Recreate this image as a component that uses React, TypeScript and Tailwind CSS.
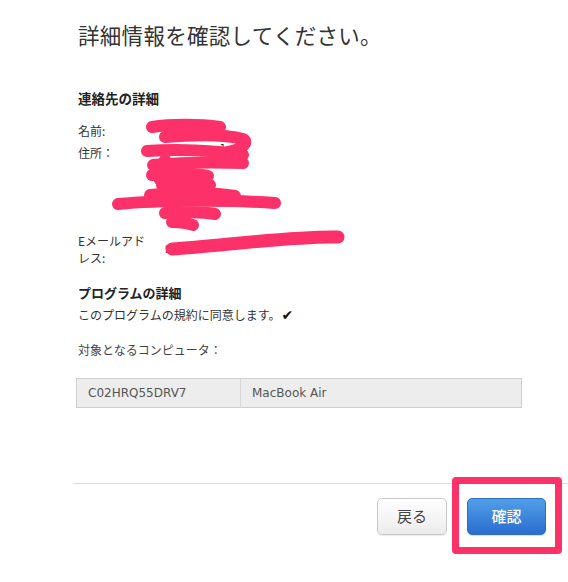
import React from "react";

const jp = { fontFamily: '"Noto Sans CJK JP", "Noto Sans", sans-serif' };
const lat = { fontFamily: '"DejaVu Sans", "Noto Sans CJK JP", sans-serif' };

export default function App() {
  return (
    <div className="relative w-[568px] h-[582px] bg-white overflow-hidden" style={jp}>
      <div className="pt-[21px] pl-[78px]">
        <h1 className="text-[21.5px] leading-[28px] text-[#333] tracking-[0.3px]">詳細情報を確認してください。</h1>

        <h2 className="mt-[39px] text-[13.5px] leading-[20px] font-bold text-[#222]">連絡先の詳細</h2>

        <div className="mt-[14px] flex text-[12px] leading-[17px] text-[#333]">
          <div className="w-[87px]">名前:</div>
          <div className="h-[17px]"></div>
        </div>
        <div className="mt-[5px] flex text-[12px] leading-[17px] text-[#333]">
          <div className="w-[87px]">住所：</div>
          <div className="h-[83px] relative">
            <span className="absolute left-[55px] top-[-4px] text-[9px] text-[#222]" style={lat}>1</span>
          </div>
        </div>
        <div className="mt-[5px] flex text-[12px] leading-[17px] text-[#333]">
          <div className="w-[70px] mr-[17px]">Eメールアドレス:</div>
          <div className="pt-[9px] text-[10px] leading-[17px] text-[#111]" style={lat}>S</div>
        </div>

        <h2 className="mt-[17px] text-[13px] leading-[20px] font-bold text-[#222]">プログラムの詳細</h2>
        <div className="mt-[3px] flex items-center text-[12px] leading-[18px] text-[#333]">
          <span>このプログラムの規約に同意します。</span>
          <span className="ml-[1px] text-[14px] font-bold text-[#111]" style={lat}>✔</span>
        </div>

        <div className="mt-[17px] text-[12px] leading-[18px] text-[#444]">対象となるコンピュータ：</div>

        <div className="mt-[19px] ml-[-2px] w-[446px] h-[30px] flex border border-[#cfcfcf] bg-[#ededed] text-[12px] text-[#555]" style={lat}>
          <div className="w-[164px] border-r border-[#d8d8d8] pl-[11px] flex items-center">C02HRQ55DRV7</div>
          <div className="flex-1 pl-[11px] flex items-center">MacBook Air</div>
        </div>
      </div>

      <div className="ml-[73px] mt-[75px] h-px bg-[#dcdcdc]"></div>

      <div className="mt-[14px] flex justify-end pr-[22px] gap-[20px]">
        <button className="w-[70px] h-[37px] rounded-[5px] border border-[#c8c8c8] bg-gradient-to-b from-white to-[#ececec] text-[15px] text-[#444] shadow-[0_1px_1px_rgba(0,0,0,0.08)]">戻る</button>
        <button className="w-[79px] h-[37px] rounded-[5px] border border-[#2f6fc4] bg-gradient-to-b from-[#519fe8] to-[#2b6dce] text-[15px] font-medium text-white shadow-[0_1px_1px_rgba(0,0,0,0.15)]">確認</button>
      </div>

      <div className="absolute left-[452px] top-[477px] w-[110px] h-[77px] border-[7px] border-[#fb3167] rounded-[4px] pointer-events-none"></div>

      <svg className="absolute left-0 top-0 pointer-events-none" width="568" height="582" viewBox="0 0 568 582">
        <g fill="none" stroke="#fd3169" strokeLinecap="round" strokeLinejoin="round">
          <g strokeWidth="12">
            <path d="M152 127 C170 124 200 124 220 127" />
            <path d="M165 137 C190 135 225 134 243 139 C250 143 240 150 228 152" />
            <path d="M147 151 C175 149 215 150 243 155" />
            <path d="M153 165 C185 162 215 162 243 163" />
            <path d="M152 175 C170 173 195 173 208 176" />
            <path d="M162 185 C180 183 200 183 210 185" />
            <path d="M150 195 C180 192 215 192 235 196" />
            <path d="M118 204 C160 200 230 200 275 203" />
            <path d="M165 213 C185 212 205 212 215 214" />
            <path d="M172 222 C180 222 188 223 193 225" />
            <path d="M160 180 L200 190 L160 200" />
            <path d="M165 160 L175 215" />
          </g>
          <path d="M172 249 C220 246 290 236 338 237" strokeWidth="13" />
        </g>
      </svg>
    </div>
  );
}
